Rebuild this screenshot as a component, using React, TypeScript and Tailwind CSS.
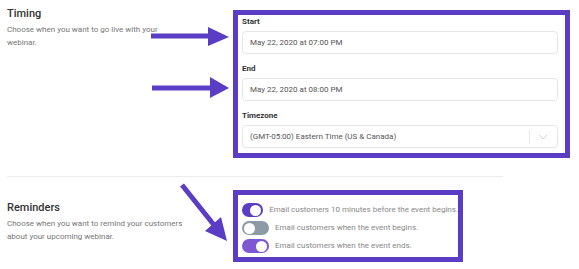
import React from "react";

const purple = "#5b3cc4";

const Field = ({ label, value, select }: { label: string; value: string; select?: boolean }) => (
  <div className="flex flex-col">
    <span className="text-[8px] leading-[10px] font-bold text-[#333]">{label}</span>
    <div className="mt-[4px] h-[23px] flex items-center rounded-[4px] border border-[#e6e6e6] bg-white pl-[7px]">
      <span className="flex-1 text-[8px] text-[#555] whitespace-nowrap">{value}</span>
      {select && (
        <div className="flex items-center h-full">
          <div className="h-[14px] w-px bg-[#e6e6e6]" />
          <svg width="27" height="10" viewBox="0 0 27 10">
            <path d="M9 3 L13 7 L17 3" fill="none" stroke="#d4d4d4" strokeWidth="1" />
          </svg>
        </div>
      )}
    </div>
  </div>
);

const Toggle = ({ on, color, label }: { on: boolean; color: string; label: string }) => (
  <div className="flex items-center">
    <div
      className={`w-[27px] h-[14px] rounded-full flex items-center px-[2px] ${on ? "justify-end" : "justify-start"}`}
      style={{ backgroundColor: color }}
    >
      <div className="w-[11px] h-[11px] rounded-full bg-white" />
    </div>
    <span className="ml-[6px] text-[8px] text-[#888] whitespace-nowrap">{label}</span>
  </div>
);

export default function App() {
  return (
    <div className="relative w-[579px] h-[269px] bg-white overflow-hidden" style={{ fontFamily: "Roboto, 'Noto Sans', sans-serif" }}>
      {/* Timing */}
      <div className="flex pt-[10px]">
        <div className="w-[233px] pl-[7px]">
          <h3 className="text-[11px] leading-[14px] font-medium text-[#333] mt-[-3px]">Timing</h3>
          <p className="w-[152px] text-[8px] leading-[13px] text-[#777] mt-[2px]">
            Choose when you want to go live with your webinar.
          </p>
        </div>
        <div
          className="w-[337px] h-[148px] border-[5px] pl-[4px] pr-[7px] pt-[2px] flex flex-col gap-[10px]"
          style={{ borderColor: purple }}
        >
          <Field label="Start" value="May 22, 2020 at 07:00 PM" />
          <Field label="End" value="May 22, 2020 at 08:00 PM" />
          <Field label="Timezone" value="(GMT-05:00) Eastern Time (US & Canada)" select />
        </div>
      </div>

      <div className="ml-[7px] mt-[18px] w-[496px] h-px bg-[#ececec]" />

      {/* Reminders */}
      <div className="flex mt-[13px]">
        <div className="w-[233px] pl-[7px] pt-[11px]">
          <h3 className="text-[11px] leading-[14px] font-medium text-[#333]">Reminders</h3>
          <p className="w-[182px] text-[8px] leading-[13px] text-[#777] mt-[2px]">
            Choose when you want to remind your customers about your upcoming webinar.
          </p>
        </div>
        <div
          className="w-[230px] h-[72px] border-[5px] pl-[4px] pt-[8px] flex flex-col gap-[4px]"
          style={{ borderColor: purple }}
        >
          <Toggle on color="#5b3cc4" label="Email customers 10 minutes before the event begins." />
          <Toggle on={false} color="#8c9ba5" label="Email customers when the event begins." />
          <Toggle on color="#7e57d2" label="Email customers when the event ends." />
        </div>
      </div>

      {/* annotation arrows */}
      <svg className="absolute inset-0 pointer-events-none" width="579" height="269">
        <line x1="151" y1="36" x2="210" y2="36" stroke={purple} strokeWidth="5" />
        <polygon points="208,27 229,37 208,46" fill={purple} />
        <line x1="152" y1="88" x2="212" y2="88" stroke={purple} strokeWidth="5" />
        <polygon points="210,77 229,88 210,98" fill={purple} />
        <line x1="182" y1="185" x2="214" y2="225" stroke={purple} strokeWidth="5" />
        <polygon points="205,231 227,241 221,217" fill={purple} />
      </svg>
    </div>
  );
}
